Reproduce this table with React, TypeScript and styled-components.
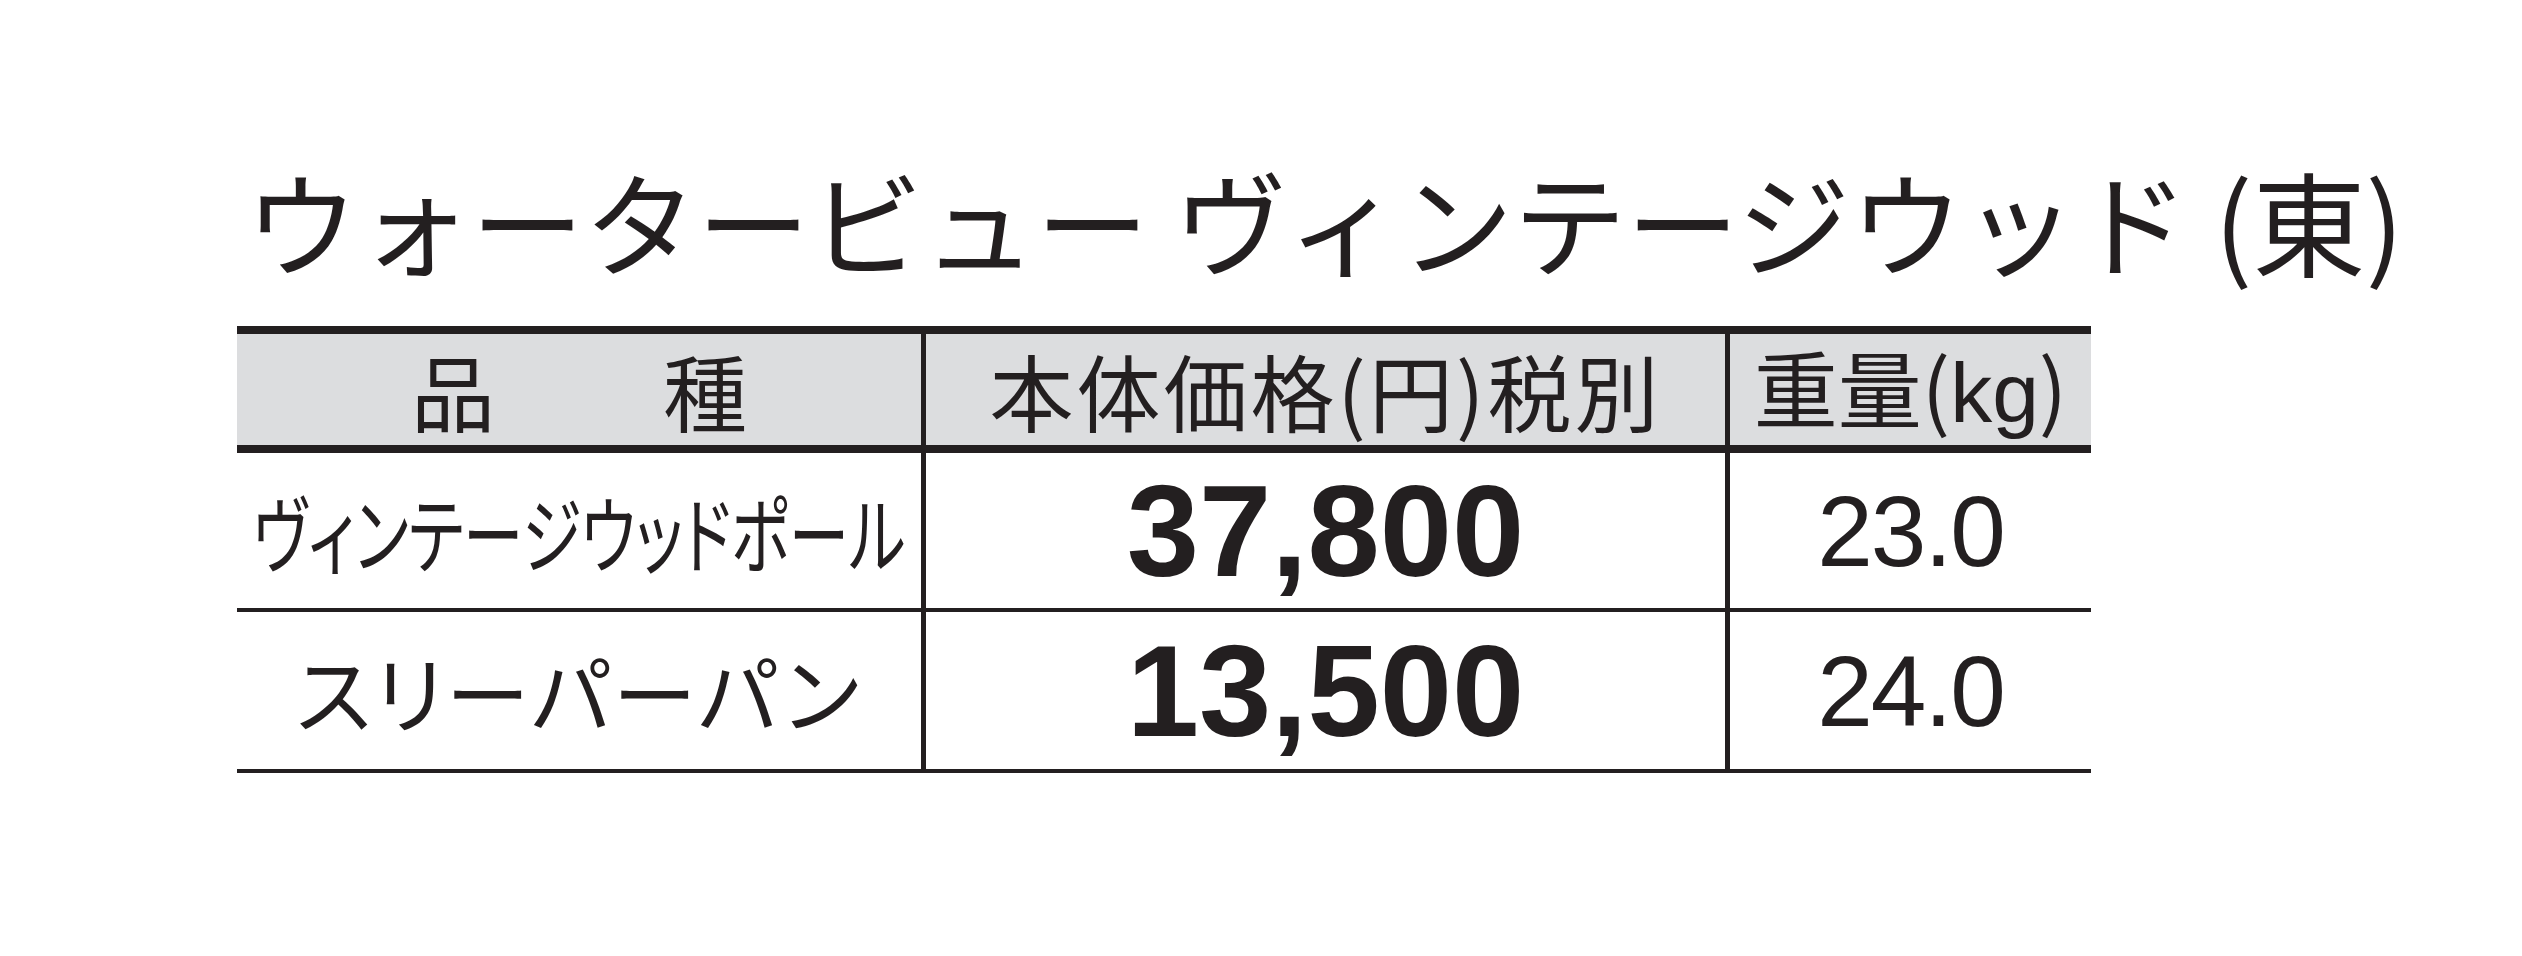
import styled, { createGlobalStyle } from "styled-components";

const GlobalStyle = createGlobalStyle`
  html, body {
    margin: 0;
    padding: 0;
    background: #ffffff;
  }
`;

const ink = "#231f20";
const jp = `"Noto Sans CJK JP", "Noto Sans", sans-serif`;
const latin = `"Liberation Sans", Arial, sans-serif`;

const Page = styled.div`
  width: 2522px;
  height: 956px;
  box-sizing: border-box;
  padding: 163px 0 0 237px;
  background: #ffffff;
  color: ${ink};
  overflow: hidden;
`;

const Title = styled.h1`
  margin: 0 0 50px 8px;
  font-family: ${jp};
  font-weight: 400;
  font-size: 113px;
  line-height: 1;
  height: 113px;
  white-space: nowrap;
`;

const Table = styled.div`
  width: 1854px;
  display: grid;
  grid-template-columns: 689px 804px 361px;
  border-top: 8px solid ${ink};
`;

const Cell = styled.div<{ $head?: boolean; $last?: boolean; $h: number; $rule: number }>`
  height: ${(p) => p.$h}px;
  box-sizing: content-box;
  background: ${(p) => (p.$head ? "#dcdddf" : "#ffffff")};
  border-right: ${(p) => (p.$last ? "none" : `5px solid ${ink}`)};
  border-bottom: ${(p) => p.$rule}px solid ${ink};
  display: flex;
  align-items: center;
  justify-content: center;
  overflow: visible;
  white-space: nowrap;
`;

const HeadText = styled.span<{ $spread?: number }>`
  font-family: ${jp};
  font-size: 84px;
  line-height: 1;
  letter-spacing: ${(p) => p.$spread ?? 0}px;
`;

const HeadLatin = styled.span`
  font-family: ${latin};
`;

const Name = styled.span<{ $squeeze?: number; $spread?: number }>`
  display: inline-block;
  font-family: ${jp};
  font-size: 84px;
  line-height: 1;
  font-feature-settings: "palt";
  letter-spacing: ${(p) => p.$spread ?? 0}px;
  transform: scaleX(${(p) => p.$squeeze ?? 1});
  transform-origin: center;
`;

const Price = styled.span`
  font-family: ${latin};
  font-weight: 700;
  font-size: 130px;
  line-height: 1;
`;

const Weight = styled.span`
  font-family: ${latin};
  font-size: 100px;
  line-height: 1;
  letter-spacing: -2px;
`;

const rows = [
  { name: "ヴィンテージウッドポール", squeeze: 0.72, spread: 0, price: "37,800", weight: "23.0", h: 155 },
  { name: "スリーパーパン", squeeze: 1, spread: 3, price: "13,500", weight: "24.0", h: 157 },
];

export default function App() {
  return (
    <Page>
      <GlobalStyle />
      <Title>ウォータービュー ヴィンテージウッド (東)</Title>
      <Table>
        <Cell $head $h={111} $rule={8}>
          <HeadText>品　　種</HeadText>
        </Cell>
        <Cell $head $h={111} $rule={8}>
          <HeadText $spread={3}>本体価格(円)税別</HeadText>
        </Cell>
        <Cell $head $last $h={111} $rule={8}>
          <HeadText>
            重量(<HeadLatin>kg</HeadLatin>)
          </HeadText>
        </Cell>
        {rows.map((r) => (
          <>
            <Cell key={r.name + "n"} $h={r.h} $rule={4}>
              <Name $squeeze={r.squeeze} $spread={r.spread}>{r.name}</Name>
            </Cell>
            <Cell key={r.name + "p"} $h={r.h} $rule={4}>
              <Price>{r.price}</Price>
            </Cell>
            <Cell key={r.name + "w"} $last $h={r.h} $rule={4}>
              <Weight>{r.weight}</Weight>
            </Cell>
          </>
        ))}
      </Table>
    </Page>
  );
}
